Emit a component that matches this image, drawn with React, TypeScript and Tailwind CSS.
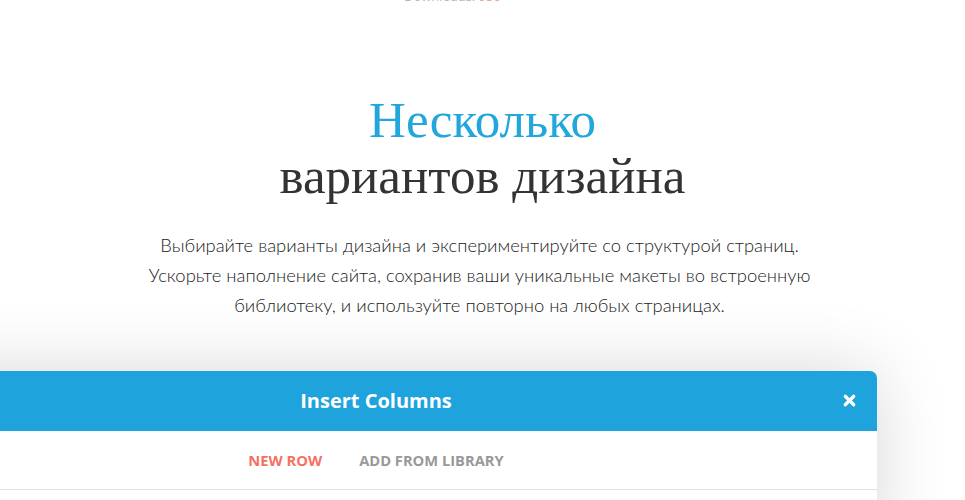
import React from 'react';
import { X } from 'lucide-react';

const Modal: React.FC = () => {
  return (
    <div className="relative ml-[-125px] w-[1002px] rounded-tr-[7px] bg-white shadow-[0_0_70px_rgba(0,0,0,0.16)]">
      <div className="relative flex h-[60px] items-center justify-center rounded-tr-[7px] bg-[#1fa3dc]">
        <h2 className="font-['Open_Sans',sans-serif] text-[20px] font-bold text-white">Insert Columns</h2>
        <button className="absolute right-[19px] top-[21px] text-white">
          <X size={17} strokeWidth={4.5} />
        </button>
      </div>
      <div className="flex h-[59px] items-center justify-center gap-[37px] border-b border-[#e3e3e3] font-['Open_Sans',sans-serif] text-[14.7px] font-bold uppercase">
        <span className="text-[#f7705f]">New Row</span>
        <span className="text-[#999999]">Add from library</span>
      </div>
      <div className="h-[60px]" />
    </div>
  );
};

export default function App() {
  return (
    <div className="h-[500px] overflow-hidden bg-white">
      <div className="mt-[-11px] pr-[60px] text-center font-['Open_Sans',sans-serif] text-[13px] leading-[14px] text-[#b5b5b5]">
        Downloads: <span className="text-[#f7a0a0]">950</span>
      </div>
      <h1 className="mt-[89px] text-center font-['Liberation_Serif',serif] text-[51px] leading-[56px] text-[#333333]">
        <span className="text-[#22a7dc]">Несколько</span>
        <br />
        вариантов дизайна
      </h1>
      <p className="mx-auto mt-[26px] w-[700px] pr-[6px] text-center font-['Lato',sans-serif] text-[18.4px] font-light leading-[30px] text-[#222222]">
        Выбирайте варианты дизайна и экспериментируйте со структурой страниц. Ускорьте наполнение сайта, сохранив ваши уникальные макеты во встроенную библиотеку, и используйте повторно на любых страницах.
      </p>
      <div className="mt-[51px]">
        <Modal />
      </div>
    </div>
  );
}
